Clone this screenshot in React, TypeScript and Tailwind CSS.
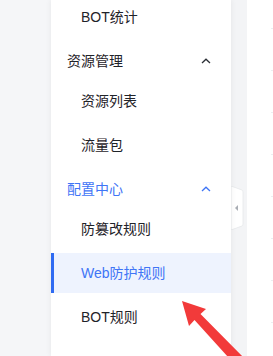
const FONT = { fontFamily: '"Liberation Sans", "Noto Sans CJK SC", sans-serif' };

function ChevronUp({ className }: { className: string }) {
  return (
    <svg width="10" height="6" viewBox="0 0 10 6" className={className}>
      <path d="M1 5 L5 1.2 L9 5" fill="none" stroke="currentColor" strokeWidth="1.3" />
    </svg>
  );
}

function Item({ label, active }: { label: string; active?: boolean }) {
  return (
    <div
      className={
        active
          ? "h-10 flex items-center pl-[27px] text-[14px] text-[#3f75f6] bg-[#eef3fe] border-l-[3px] border-[#2f6bf2]"
          : "h-10 flex items-center pl-[30px] text-[14px] text-[#1f2329]"
      }
    >
      {label}
    </div>
  );
}

function Group({ label, active }: { label: string; active?: boolean }) {
  return (
    <div
      className={
        "h-10 flex items-center justify-between pl-4 pr-5 text-[14px] " +
        (active ? "text-[#3f75f6]" : "text-[#1f2329]")
      }
    >
      <span>{label}</span>
      <ChevronUp className={active ? "text-[#3f75f6]" : "text-[#2b2f36]"} />
    </div>
  );
}

export default function App() {
  return (
    <div className="relative w-[273px] h-[356px] overflow-hidden flex bg-[#f5f6f8]" style={FONT}>
      <div className="w-[51px] shrink-0" />
      <div className="w-[180px] shrink-0 bg-white shadow-[0_0_6px_rgba(0,0,0,0.07)] z-10">
        <div className="-mt-[3px] flex flex-col">
          <Item label="BOT统计" />
          <div className="h-1" />
          <Group label="资源管理" />
          <Item label="资源列表" />
          <div className="h-1" />
          <Item label="流量包" />
          <div className="h-1" />
          <Group label="配置中心" active />
          <Item label="防篡改规则" />
          <div className="h-1" />
          <Item label="Web防护规则" active />
          <div className="h-1" />
          <Item label="BOT规则" />
          <div className="h-[8px]" />
          <Item label="自定义规则" />
        </div>
      </div>
      <div className="relative w-4 shrink-0 bg-[#f3f4f6]">
        <svg
          width="14"
          height="44"
          viewBox="0 0 14 44"
          className="absolute left-0 top-[186px]"
        >
          <path
            d="M0 0 L11 4 Q12 4.5 12 6 L12 38 Q12 39.5 11 40 L0 44 Z"
            fill="#ffffff"
            stroke="#e6e8eb"
            strokeWidth="0.8"
          />
          <path d="M7 19 L7 25 L4 22 Z" fill="#a9adb4" />
        </svg>
      </div>
      <div className="flex-1 bg-white pl-6">
        <div className="-mt-[13px] flex flex-col">
          {[0, 1, 2, 3, 4, 5, 6, 7, 8].map((i) => (
            <div key={i} className="h-[42px] border-b border-[#eceef1]" />
          ))}
        </div>
      </div>
      <svg
        width="273"
        height="356"
        viewBox="0 0 273 356"
        className="absolute left-0 top-0 z-20 pointer-events-none"
      >
        <path
          d="M182 301 L206 309 L200.5 314 L246 360 L238 368 L194.5 320 L189 326 Z"
          fill="#f23a3a"
        />
      </svg>
    </div>
  );
}
